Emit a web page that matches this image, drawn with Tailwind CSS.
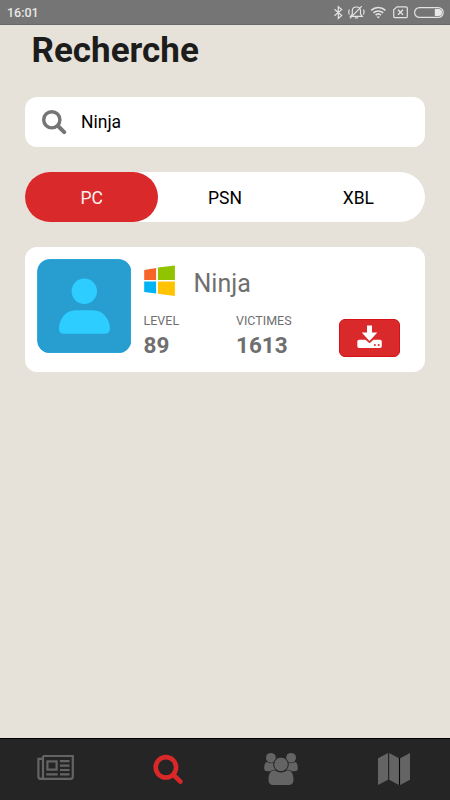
<!DOCTYPE html>
<html lang="fr">
<head>
<meta charset="utf-8">
<title>Recherche</title>
<script src="https://cdn.jsdelivr.net/npm/@tailwindcss/browser@4"></script>
</head>
<body class="w-[450px] h-[800px] overflow-hidden bg-[#e6e1d9] font-['Roboto',sans-serif] flex flex-col text-[#111]">
<!-- Status bar -->
<header class="h-[25px] shrink-0 bg-[#757575] border-b border-[#686868] flex items-center pl-[7px] pr-[6px] text-[#e8e8e8]">
  <span class="text-[12.5px] leading-[25px] font-medium">16:01</span>
  <svg class="ml-auto" width="114" height="24" viewBox="0 0 114 24" fill="none" stroke="#e2e2e2" stroke-width="1.2">
    <path d="M4.5 9.3l7.2 6.2-3.4 3V6.7l3.4 2.9-7.2 6.2"/>
    <path d="M20.5 16.3h11.8l-1.8-2.3v-3.2c0-2.4-1.6-3.8-4.1-3.8s-4.1 1.4-4.1 3.8V14zM24.8 17.8h3.2M31.8 6.2L20 18.4M19.3 9.5c-.8 1.6-.8 3.5 0 5M33.5 9.5c.8 1.6.8 3.5 0 5"/>
    <path d="M41.2 10.4c4-3.8 10.2-3.8 14.2 0M43.4 12.9c2.8-2.6 7-2.6 9.8 0M45.6 15.2c1.5-1.4 3.9-1.4 5.4 0" stroke-width="1.6"/>
    <path d="M46.5 16.6h3.6l-1.8 1.9z" fill="#e2e2e2" stroke="none"/>
    <path d="M67 6.8h8.8q1.5 0 1.5 1.3v8.3q0 1.3-1.5 1.3H65.2q-1.5 0-1.5-1.3V9.8z"/>
    <path d="M68 9.8l5 5m0-5l-5 5" stroke-width="1.5"/>
    <rect x="84.6" y="7.6" width="28.6" height="9.8" rx="4.9"/>
    <path d="M104.8 9h3.7a3.5 3.5 0 010 7h-3.7z" fill="#e8e8e8" stroke="none"/>
  </svg>
</header>

<main class="flex-1 px-[25px]">
  <h1 class="pl-[6.5px] h-[72px] pt-[5px] text-[35px] leading-[42px] font-bold text-[#1c1c1c]">Recherche</h1>

  <!-- Search field -->
  <div class="h-[50px] bg-white rounded-[12px] flex items-center">
    <svg class="ml-[17px]" width="25" height="25" viewBox="0 0 25 25" fill="none" stroke="#757575"><circle cx="9.8" cy="9.8" r="8.1" stroke-width="3.4"/><path d="M16 16l6.2 6.2" stroke-width="4" stroke-linecap="round"/></svg>
    <span class="ml-[14px] text-[17.5px] text-black">Ninja</span>
  </div>

  <!-- Platform selector -->
  <div class="mt-[25px] h-[50px] bg-white rounded-full grid grid-cols-3 text-center text-[17.5px] leading-[52px] text-black">
    <div class="h-[50px] bg-[#d9292b] text-[#fff0f0] rounded-full">PC</div>
    <div>PSN</div>
    <div>XBL</div>
  </div>

  <!-- Player result -->
  <section class="mt-[25px] h-[125px] bg-white rounded-[12px] flex p-[12px] pr-[12.5px] text-[#6f6f6f]">
    <svg class="shrink-0" width="94" height="94" viewBox="0 0 94 94">
      <rect x=".6" y=".5" width="93.2" height="93.2" rx="12" fill="#279dd0" stroke="#109bd3" stroke-width=".8"/>
      <circle cx="47.3" cy="32.2" r="12.7" fill="#2dceff"/>
      <path d="M38.5 51.2H56C66 51.2 72.9 60 72.9 69.8Q72.9 74.8 67.9 74.8H27Q22 74.8 22 69.8C22 60 28.5 51.2 38.5 51.2Z" fill="#2dceff"/>
    </svg>
    <div class="ml-[12.5px] w-[195.5px] shrink-0">
      <div class="flex pt-[6px] h-[53.5px]">
        <svg width="32" height="32" viewBox="0 0 32 32" class="shrink-0">
          <path d="M.2 4.9L12.1 3.1V14.9H.2z" fill="#f76628"/>
          <path d="M13.9 2.6L30.9.4V14.9H13.9z" fill="#91c300"/>
          <path d="M.2 16.6H12.1V28.6L.2 26.9z" fill="#00b3f4"/>
          <path d="M13.9 16.6H30.9V31.1L13.9 28.7z" fill="#ffc300"/>
        </svg>
        <span class="ml-[18px] text-[25px] leading-[38px]">Ninja</span>
      </div>
      <div class="grid grid-cols-[92.5px_1fr]">
        <div><div class="text-[12.5px] leading-[15px]">LEVEL</div><div class="text-[22.5px] leading-[34px] font-bold">89</div></div>
        <div><div class="text-[12.5px] leading-[15px]">VICTIMES</div><div class="text-[22.5px] leading-[34px] font-bold">1613</div></div>
      </div>
    </div>
    <button class="mt-[59.5px] w-[61px] h-[38px] rounded-[6px] bg-[#d9292b] border border-[#d51218] flex items-center justify-center shrink-0">
      <svg width="26" height="24" viewBox="0 0 26 24" fill="#fff" class="mb-[2px]">
        <path d="M10 .6h5v6.8h5.3L12.5 16.1 4.7 7.4H10z"/>
        <path d="M2 14.8h6.5l4 3.5 4-3.5H23q1.8 0 1.8 1.8v4.6q0 1.8-1.8 1.8H2Q.3 23 .3 21.2v-4.6Q.3 14.8 2 14.8z"/>
        <circle cx="17.9" cy="20" r="1" fill="#d9292b"/><circle cx="21.7" cy="20" r="1" fill="#d9292b"/>
      </svg>
    </button>
  </section>
</main>

<!-- Bottom navigation -->
<nav class="h-[62px] shrink-0 bg-[#252525] border-t border-black grid grid-cols-4 items-center justify-items-center">
  <svg class="mb-[3px]" width="38" height="28" viewBox="0 0 38 28" fill="none" stroke="#646464" stroke-width="2.2">
    <path d="M6 2H35.8v20.5q0 2.4-2.4 2.4H4Q1.4 24.9 1.4 22.4V4.8H6M6 2v20.5q0 2.4-2 2.4"/>
    <rect x="10.4" y="7.4" width="9.2" height="8.2"/>
    <path d="M23 7.2h9.5M23 11.7h9.5M23 16h9.5M23 20.3h9.5M9.3 20.3h11.4"/>
  </svg>
  <svg width="31" height="31" viewBox="0 0 31 31" fill="none" stroke="#da2828"><circle cx="12.9" cy="13.3" r="10.2" stroke-width="4.6"/><path d="M20.8 21.1l6.6 6.6" stroke-width="4.6" stroke-linecap="round"/></svg>
  <svg class="mb-[2px]" width="34" height="34" viewBox="0 0 34 34" fill="#646464">
    <circle cx="6.9" cy="5.8" r="4.9"/><circle cx="27.1" cy="5.8" r="4.9"/>
    <path d="M3 10Q7 12.5 9.6 10.2C9.4 14 10.8 16.5 12 17.5Q8 17.5 6.2 19.3H3.2Q.2 19.3.2 16.3C.2 13.2 1 10 3 10zM31 10Q27 12.5 24.4 10.2C24.6 14 23.2 16.5 22 17.5Q26 17.5 27.8 19.3h3Q33.8 19.3 33.8 16.3C33.8 13.2 33 10 31 10z"/>
    <circle cx="17" cy="12.4" r="7.3" stroke="#252525"/>
    <path d="M10.7 18.2Q17 22.8 23.3 18.2C28 18.2 29.5 23 29.5 27.8Q29.5 33 24.5 33H9.5Q4.5 33 4.5 27.8C4.5 23 6 18.2 10.7 18.2z"/>
  </svg>
  <svg class="mb-[2px]" width="34" height="34" viewBox="0 0 34 34" fill="#646464">
    <path d="M1 6.2L11 1.1V27.7L1 32.9zM12.2 1.1L21.9 6.2V32.9L12.2 27.7zM23.1 6.2L33 1.1V27.7L23.1 32.9z"/><path d="M22.5 6v27" stroke="#080808" stroke-width="1"/>
  </svg>
</nav>
</body>
</html>
